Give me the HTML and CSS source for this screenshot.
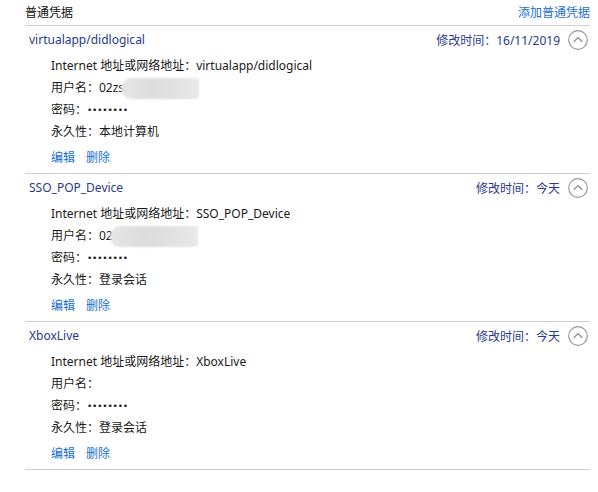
FILE: index.html
```html
<!DOCTYPE html>
<html lang="zh-CN">
<head>
<meta charset="utf-8">
<link rel="stylesheet" href="styles.css">
</head>
<body>
<div class="panel">
  <div class="header">
    <span class="header-title">普通凭据</span>
    <a class="link">添加普通凭据</a>
  </div>

  <div class="entry">
    <div class="entry-head">
      <span class="entry-title">virtualapp/didlogical</span>
      <span class="entry-meta">修改时间：16/11/2019</span>
      <svg class="toggle" width="20" height="20" viewBox="0 0 20 20"><circle cx="10" cy="10" r="9.3" fill="none" stroke="#9a9a9a" stroke-width="1.2"/><path d="M5.8 11.8 L10 7.6 L14.2 11.8" fill="none" stroke="#8a8a8a" stroke-width="1.3"/></svg>
    </div>
    <div class="details">
      <div class="row">Internet 地址或网络地址：virtualapp/didlogical</div>
      <div class="row">用户名：02zs<span class="mask mask-a"></span></div>
      <div class="row">密码：<span class="dots">••••••••</span></div>
      <div class="row">永久性：本地计算机</div>
      <div class="actions"><a class="link">编辑</a><a class="link">删除</a></div>
    </div>
  </div>

  <div class="entry">
    <div class="entry-head">
      <span class="entry-title">SSO_POP_Device</span>
      <span class="entry-meta">修改时间：今天</span>
      <svg class="toggle" width="20" height="20" viewBox="0 0 20 20"><circle cx="10" cy="10" r="9.3" fill="none" stroke="#9a9a9a" stroke-width="1.2"/><path d="M5.8 11.8 L10 7.6 L14.2 11.8" fill="none" stroke="#8a8a8a" stroke-width="1.3"/></svg>
    </div>
    <div class="details">
      <div class="row">Internet 地址或网络地址：SSO_POP_Device</div>
      <div class="row">用户名：02<span class="mask mask-b"></span></div>
      <div class="row">密码：<span class="dots">••••••••</span></div>
      <div class="row">永久性：登录会话</div>
      <div class="actions"><a class="link">编辑</a><a class="link">删除</a></div>
    </div>
  </div>

  <div class="entry">
    <div class="entry-head">
      <span class="entry-title">XboxLive</span>
      <span class="entry-meta">修改时间：今天</span>
      <svg class="toggle" width="20" height="20" viewBox="0 0 20 20"><circle cx="10" cy="10" r="9.3" fill="none" stroke="#9a9a9a" stroke-width="1.2"/><path d="M5.8 11.8 L10 7.6 L14.2 11.8" fill="none" stroke="#8a8a8a" stroke-width="1.3"/></svg>
    </div>
    <div class="details">
      <div class="row">Internet 地址或网络地址：XboxLive</div>
      <div class="row">用户名：</div>
      <div class="row">密码：<span class="dots">••••••••</span></div>
      <div class="row">永久性：登录会话</div>
      <div class="actions"><a class="link">编辑</a><a class="link">删除</a></div>
    </div>
  </div>
</div>
</body>
</html>
```
FILE: styles.css
```css
html, body {
  margin: 0;
  padding: 0;
  background: #ffffff;
}
body {
  font-family: "Microsoft YaHei", "Noto Sans", "Noto Sans CJK SC", sans-serif;
  font-size: 12px;
  color: #1a1a1a;
}
.panel {
  margin-left: 25px;
  width: 565px;
}
.header {
  height: 26px;
  display: flex;
  align-items: center;
  justify-content: space-between;
  border-bottom: 1px solid #cfcfcf;
  box-sizing: border-box;
  padding-bottom: 2px;
}
.header-title {
  color: #111;
}
.link {
  color: #1a6fd0;
  cursor: pointer;
}
.entry {
  border-bottom: 1px solid #cfcfcf;
  padding-bottom: 4px;
}
.entry-head {
  height: 27px;
  display: flex;
  align-items: center;
  padding-left: 4px;
  padding-right: 2px;
}
.entry-title {
  color: #2a3a8e;
  flex: 1;
}
.entry-meta {
  color: #2a3a8e;
  margin-right: 8px;
}
.toggle {
  display: block;
}
.details {
  padding-left: 26px;
  padding-top: 2px;
}
.row {
  height: 22px;
  line-height: 22px;
  white-space: nowrap;
}
.dots {
  letter-spacing: -0.2px;
  font-family: "DejaVu Sans", sans-serif;
  font-size: 9px;
  vertical-align: 1px;
}
.mask {
  display: inline-block;
  height: 21px;
  vertical-align: middle;
  background: linear-gradient(90deg, #e6e6e6 0%, #dcdcdc 40%, #e1e1e1 70%, #e9e9e9 100%);
  border-radius: 10px 3px 3px 10px;
  filter: blur(1px);
}
.mask-a {
  width: 78px;
  margin-left: -3px;
}
.mask-b {
  width: 88px;
  margin-left: -3px;
}
.actions {
  height: 22px;
  line-height: 22px;
  margin-top: 4px;
  display: flex;
  gap: 11px;
}
```
